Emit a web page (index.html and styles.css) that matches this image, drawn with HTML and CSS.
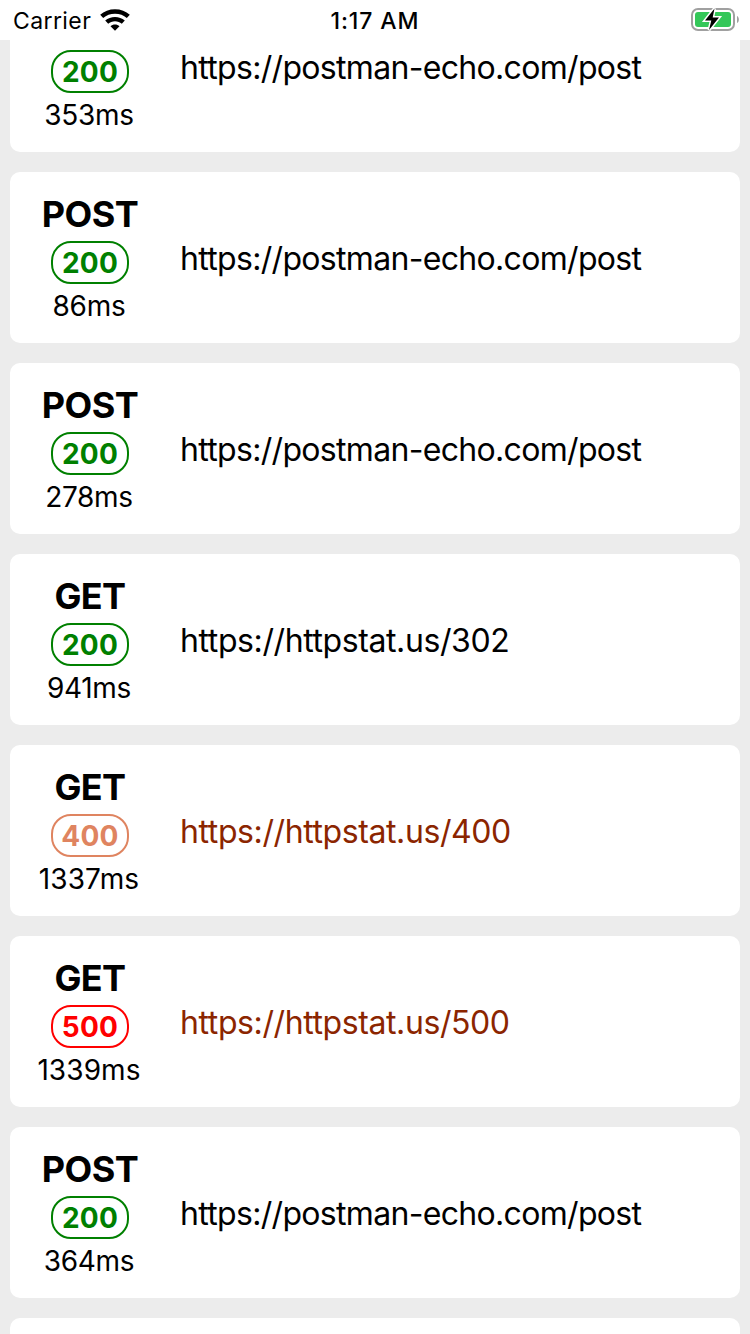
FILE: index.html
```html
<!DOCTYPE html>
<html lang="en">
<head>
<meta charset="utf-8">
<title>Requests</title>
<link rel="stylesheet" href="styles.css">
</head>
<body>
<header class="status-bar">
  <div class="carrier"><span class="carrier-name">Carrier</span>
    <svg class="wifi" width="30" height="22" viewBox="0 0 30 22">
      <path d="M15 .2C9.300 .2 4 2.200 .2 5.800L3.200 8.900C6.300 6.200 10.400 4.700 15 4.700S23.700 6.200 26.800 8.900L29.800 5.800C26 2.200 20.700 .2 15 .2Z"/>
      <path d="M15 7.900C11.300 7.900 7.900 9.200 5.200 11.600L8.200 14.700C10 13.200 12.400 12.300 15 12.300S20 13.200 21.800 14.700L24.800 11.600C22.100 9.200 18.700 7.900 15 7.900Z"/>
      <path d="M15 15.500C13.300 15.500 11.700 16.100 10.500 17.200L15 21.800L19.500 17.200C18.300 16.100 16.700 15.500 15 15.500Z"/>
    </svg>
  </div>
  <div class="clock">1:17 AM</div>
  <svg class="battery" width="50" height="26" viewBox="0 0 50 26">
    <rect class="battery-shell" x="2" y="2" width="42" height="21" rx="6"/>
    <rect class="battery-fill" x="5" y="5" width="36" height="15" rx="3"/>
    <path class="battery-cap" d="M47 9C49.500 10 49.500 15 47 16Z"/>
    <path class="battery-bolt" d="M24.500 1.500L15 13.500H21.300L19 23L29 10.500H22.700Z"/>
  </svg>
</header>
<main class="list">
  <article class="card"><div class="meta"><div class="method"></div><div class="code">200</div><div class="time">353ms</div></div><div class="url">https://postman-echo.com/post</div></article>
  <article class="card"><div class="meta"><div class="method">POST</div><div class="code">200</div><div class="time">86ms</div></div><div class="url">https://postman-echo.com/post</div></article>
  <article class="card"><div class="meta"><div class="method">POST</div><div class="code">200</div><div class="time">278ms</div></div><div class="url">https://postman-echo.com/post</div></article>
  <article class="card"><div class="meta"><div class="method">GET</div><div class="code">200</div><div class="time">941ms</div></div><div class="url short">https://httpstat.us/302</div></article>
  <article class="card client-error"><div class="meta"><div class="method">GET</div><div class="code">400</div><div class="time long">1337ms</div></div><div class="url short">https://httpstat.us/400</div></article>
  <article class="card server-error"><div class="meta"><div class="method">GET</div><div class="code">500</div><div class="time long">1339ms</div></div><div class="url short">https://httpstat.us/500</div></article>
  <article class="card"><div class="meta"><div class="method">POST</div><div class="code">200</div><div class="time">364ms</div></div><div class="url">https://postman-echo.com/post</div></article>
  <article class="card"></article>
</main>
</body>
</html>
```
FILE: styles.css
```css
* { box-sizing: border-box; }
body { margin: 0; height: 1334px; overflow: hidden; display: flex; flex-direction: column; background: #ececec; color: #000; font-family: Inter, "Liberation Sans", sans-serif; }
.status-bar { height: 40px; flex: none; display: grid; grid-template-columns: 1fr auto 1fr; align-items: center; background: #fff; padding: 0 10px 0 13px; }
.carrier { display: flex; align-items: center; gap: 9px; font-size: 23px; letter-spacing: 0.4px; }
.carrier-name { padding-top: 1px; }
.clock { font-size: 23px; font-weight: 550; letter-spacing: 0.9px; padding: 1px 3px 0 0; }
.battery { justify-self: end; }
.battery-shell { fill: #fff; stroke: #a0a0a0; stroke-width: 2; }
.battery-fill { fill: #34c759; }
.battery-cap { fill: #a0a0a0; }
.battery-bolt { fill: #000; stroke: #fff; stroke-width: 3; paint-order: stroke; }
.list { flex: 1; min-height: 0; overflow: hidden; display: flex; flex-direction: column; gap: 20px; padding: 0 10px; }
.card { flex: none; height: 171px; display: flex; align-items: center; background: #fff; border-radius: 10px; }
.card:first-child { margin-top: -59px; }
.meta { width: 160px; display: flex; flex-direction: column; align-items: center; }
.method { height: 43px; font-size: 36px; line-height: 43px; font-weight: 700; letter-spacing: -0.6px; }
.code { width: 78px; height: 43px; margin: 5px 0 6px; border: 2px solid #008000; border-radius: 20px; color: #008000; font-size: 28px; line-height: 40px; font-weight: 700; letter-spacing: 0.2px; text-align: center; }
.time { height: 33px; font-size: 28px; line-height: 33px; letter-spacing: -0.3px; padding-right: 2px; }
.time.long { letter-spacing: 0.1px; }
.url { font-size: 32px; line-height: 38px; letter-spacing: -0.68px; padding-top: 2px; margin-left: 10px; }
.url.short { letter-spacing: -0.4px; }
.client-error .url, .server-error .url { color: #8b2500; }
.client-error .code { color: #df8460; border-color: #df8460; }
.server-error .code { color: #f00; border-color: #f00; }
```
